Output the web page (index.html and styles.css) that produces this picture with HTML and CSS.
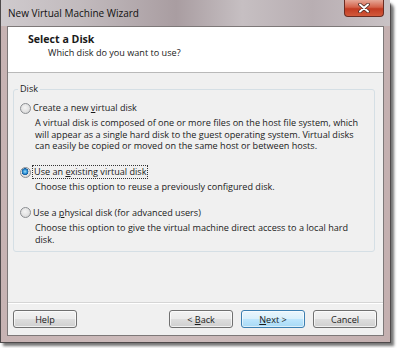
FILE: index.html
```html
<!DOCTYPE html>
<html lang="en">
<head>
    <meta charset="UTF-8">
    <title>New Virtual Machine Wizard</title>
    <link rel="stylesheet" href="styles.css">
</head>
<body>
    <div class="window">
        <div class="titlebar">
            <span class="title">New Virtual Machine Wizard</span>
            <div class="close-btn">
                <svg width="14" height="10" viewBox="0 0 14 10">
                    <path d="M3 1.5 L11 8.5 M11 1.5 L3 8.5" stroke="#4a2a25" stroke-width="3.6" stroke-linecap="round"/>
                    <path d="M3 1.5 L11 8.5 M11 1.5 L3 8.5" stroke="#ffffff" stroke-width="2" stroke-linecap="round"/>
                </svg>
            </div>
        </div>

        <div class="client">
            <div class="header">
                <h1>Select a Disk</h1>
                <p>Which disk do you want to use?</p>
            </div>

            <div class="content">
                <fieldset class="group">
                    <legend>Disk</legend>

                    <div class="option">
                        <div class="option-label">
                            <span class="radio"></span>
                            <span>Create a new <u>v</u>irtual disk</span>
                        </div>
                        <p class="desc">A virtual disk is composed of one or more files on the host file system, which will appear as a single hard disk to the guest operating system. Virtual disks can easily be copied or moved on the same host or between hosts.</p>
                    </div>

                    <div class="option">
                        <div class="option-label">
                            <span class="radio checked"></span>
                            <span class="focus">Use an <u>e</u>xisting virtual disk</span>
                        </div>
                        <p class="desc">Choose this option to reuse a previously configured disk.</p>
                    </div>

                    <div class="option">
                        <div class="option-label">
                            <span class="radio"></span>
                            <span>Use a <u>p</u>hysical disk (for advanced users)</span>
                        </div>
                        <p class="desc">Choose this option to give the virtual machine direct access to a local hard disk.</p>
                    </div>
                </fieldset>
            </div>

            <div class="footer">
                <button class="btn">Help</button>
                <div class="spacer"></div>
                <button class="btn">&lt; <u>B</u>ack</button>
                <button class="btn default"><u>N</u>ext &gt;</button>
                <button class="btn">Cancel</button>
            </div>
        </div>
    </div>
</body>
</html>
```

FILE: styles.css
```css
* {
    margin: 0;
    padding: 0;
    box-sizing: border-box;
}

body {
    width: 398px;
    height: 348px;
    background: #ffffff;
    font-family: 'Open Sans', 'Noto Sans', sans-serif;
    font-size: 9.1px;
    color: #1a1a1a;
    overflow: hidden;
}

.window {
    width: 391px;
    height: 343px;
    display: flex;
    flex-direction: column;
    border: 1px solid #4e4a4b;
    border-top: none;
    border-radius: 0 6px 0 0;
    background: linear-gradient(90deg, #c7b3b3 0%, #cdbcbc 40%, #c4b0b0 100%);
    box-shadow: 3px 3px 3px rgba(0, 0, 0, 0.55);
}

.titlebar {
    height: 26px;
    display: flex;
    align-items: flex-start;
    padding: 0 6px 0 7px;
    background: linear-gradient(90deg, #cfcacd 0%, #c2bbbe 20%, #a99da1 45%, #c6bfc2 62%, #b8aeb2 80%, #c9c2c5 100%);
}

.title {
    font-size: 10px;
    line-height: 26px;
    color: #111;
}

.close-btn {
    margin-left: auto;
    width: 40px;
    height: 17px;
    display: flex;
    align-items: center;
    justify-content: center;
    border: 1px solid #6b2c22;
    border-top: none;
    border-radius: 0 0 4px 4px;
    background: linear-gradient(180deg, #e6a797 0%, #d4624a 45%, #c23b22 55%, #d25a3c 100%);
}

.client {
    flex: 1;
    margin: 0 6px 6px 6px;
    border: 1px solid #7d7878;
    background: #f0f0f0;
    display: flex;
    flex-direction: column;
}

.header {
    height: 46px;
    background: #ffffff;
    border-bottom: 1px solid #b9b9b9;
    padding: 5px 0 0 20px;
}

.header h1 {
    font-size: 10.6px;
    font-weight: 700;
    line-height: 14px;
}

.header p {
    line-height: 13px;
    margin-left: 20px;
}

.content {
    height: 229px;
    padding: 10px 8px 0 5px;
}

.group {
    border: 1px solid #d5dfe5;
    border-radius: 3px;
    padding: 7px 6px 8px 6px;
    height: 169px;
}

.group legend {
    padding: 0 2px;
    margin-left: -2px;
    line-height: 12px;
}

.option + .option {
    margin-top: 14px;
}

.option-label {
    display: flex;
    align-items: center;
    gap: 2px;
    line-height: 12px;
}

.radio {
    width: 11px;
    height: 11px;
    border-radius: 50%;
    border: 1px solid #8b8e92;
    background: radial-gradient(circle at 45% 40%, #f4f4f4 0%, #e2e2e2 55%, #cacaca 100%);
}

.radio.checked {
    background:
        radial-gradient(circle at 45% 40%, #9fdcf7 0, #2f93d6 2px, #10599c 3.2px, transparent 3.6px),
        radial-gradient(circle at 45% 40%, #f4f4f4 0%, #e2e2e2 55%, #cacaca 100%);
}

.focus {
    outline: 1px dotted #333;
    outline-offset: 0;
    padding: 0 1px;
}

.desc {
    margin: 3px 0 0 15px;
    line-height: 11.7px;
    padding-right: 8px;
}

.footer {
    flex: 1;
    border-top: 1px solid #d5d5d5;
    box-shadow: inset 0 1px 0 #ffffff;
    display: flex;
    align-items: flex-start;
    gap: 8px;
    padding: 7px 6px 0 5px;
}

.spacer {
    flex: 1;
}

.btn {
    width: 64px;
    height: 18px;
    font-family: inherit;
    font-size: 9.1px;
    color: #1a1a1a;
    border: 1px solid #707070;
    border-radius: 3px;
    background: linear-gradient(180deg, #f2f2f2 0%, #ebebeb 48%, #dddddd 52%, #cfcfcf 100%);
    box-shadow: inset 0 0 0 1px rgba(255, 255, 255, 0.7);
}

.btn.default {
    border-color: #3c7fb1;
    background: linear-gradient(180deg, #eaf6fd 0%, #d9f0fc 48%, #bee6fd 52%, #a7d9f5 100%);
    box-shadow: inset 0 0 0 1px rgba(255, 255, 255, 0.6);
}
```
